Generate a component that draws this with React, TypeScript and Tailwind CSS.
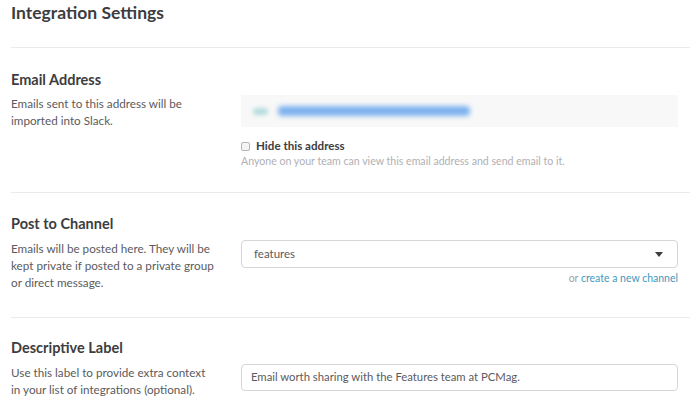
export default function App() {
  return (
    <div className="w-[697px] h-[405px] overflow-hidden bg-white pl-[11px] pr-[7px] font-['Lato','Liberation_Sans',sans-serif] text-[#5b5a5e]">
      <h1 className="text-[17.5px] leading-[26px] font-bold text-[#3d3c40]">Integration Settings</h1>

      <div className="mt-[21px] border-t border-[#ebebeb]" />

      {/* email */}
      <section className="pt-[22px] pb-[24px] pr-[12px]">
        <h2 className="text-[14.5px] leading-[20px] font-bold text-[#3d3c40]">Email Address</h2>
        <div className="mt-[5px] flex">
          <p className="w-[230px] pr-[27px] text-[11.7px] leading-[17px]">
            Emails sent to this address will be imported into Slack.
          </p>
          <div className="flex-1">
            <div className="h-[32px] bg-[#f8f8f8] flex items-center pl-[12px] gap-[10px]">
              <div className="w-[15px] h-[7px] rounded-full bg-[#b4dcdc] blur-[2px]" />
              <div className="w-[192px] h-[10px] rounded-sm bg-[#7db2ee] blur-[2.5px]" />
            </div>
            <label className="mt-[12px] flex items-center gap-[6px] text-[11.6px] leading-[14px] font-bold text-[#3d3c40]">
              <span className="w-[9px] h-[9px] rounded-[2px] border border-[#b5b5b5] bg-[#f4f4f4]" />
              Hide this address
            </label>
            <p className="mt-[1px] text-[10.6px] leading-[14px] text-[#b0b0b4]">
              Anyone on your team can view this email address and send email to it.
            </p>
          </div>
        </div>
      </section>

      <div className="border-t border-[#ebebeb]" />

      {/* channel */}
      <section className="pt-[21px] pb-[26px] pr-[12px]">
        <h2 className="text-[14.5px] leading-[20px] font-bold text-[#3d3c40]">Post to Channel</h2>
        <div className="mt-[6px] flex">
          <p className="w-[230px] pr-[27px] text-[11.7px] leading-[17px]">
            Emails will be posted here. They will be kept private if posted to a private group or direct message.
          </p>
          <div className="flex-1">
            <div className="h-[28px] rounded-[4px] border border-[#d6d6d6] flex items-center justify-between pl-[12px] pr-[14px] text-[11.5px] text-[#5b5a5e]">
              <span>features</span>
              <svg width="8" height="5" viewBox="0 0 8 5">
                <path d="M0 0h8L4 5z" fill="#3d3c40" />
              </svg>
            </div>
            <div className="mt-[3px] text-right text-[10.5px] leading-[14px] text-[#a0a0a4]">
              or <span className="text-[#3f9ac0]">create a new channel</span>
            </div>
          </div>
        </div>
      </section>

      <div className="border-t border-[#ebebeb]" />

      {/* label */}
      <section className="pt-[20px] pr-[12px]">
        <h2 className="text-[14.5px] leading-[20px] font-bold text-[#3d3c40]">Descriptive Label</h2>
        <div className="mt-[6px] flex">
          <p className="w-[230px] pr-[27px] text-[11.7px] leading-[17px]">
            Use this label to provide extra context in your list of integrations (optional).
          </p>
          <div className="flex-1">
            <div className="h-[27px] rounded-[4px] border border-[#d6d6d6] flex items-center pl-[9px] text-[11.3px] text-[#5b5a5e]">
              Email worth sharing with the Features team at PCMag.
            </div>
          </div>
        </div>
      </section>
    </div>
  )
}
